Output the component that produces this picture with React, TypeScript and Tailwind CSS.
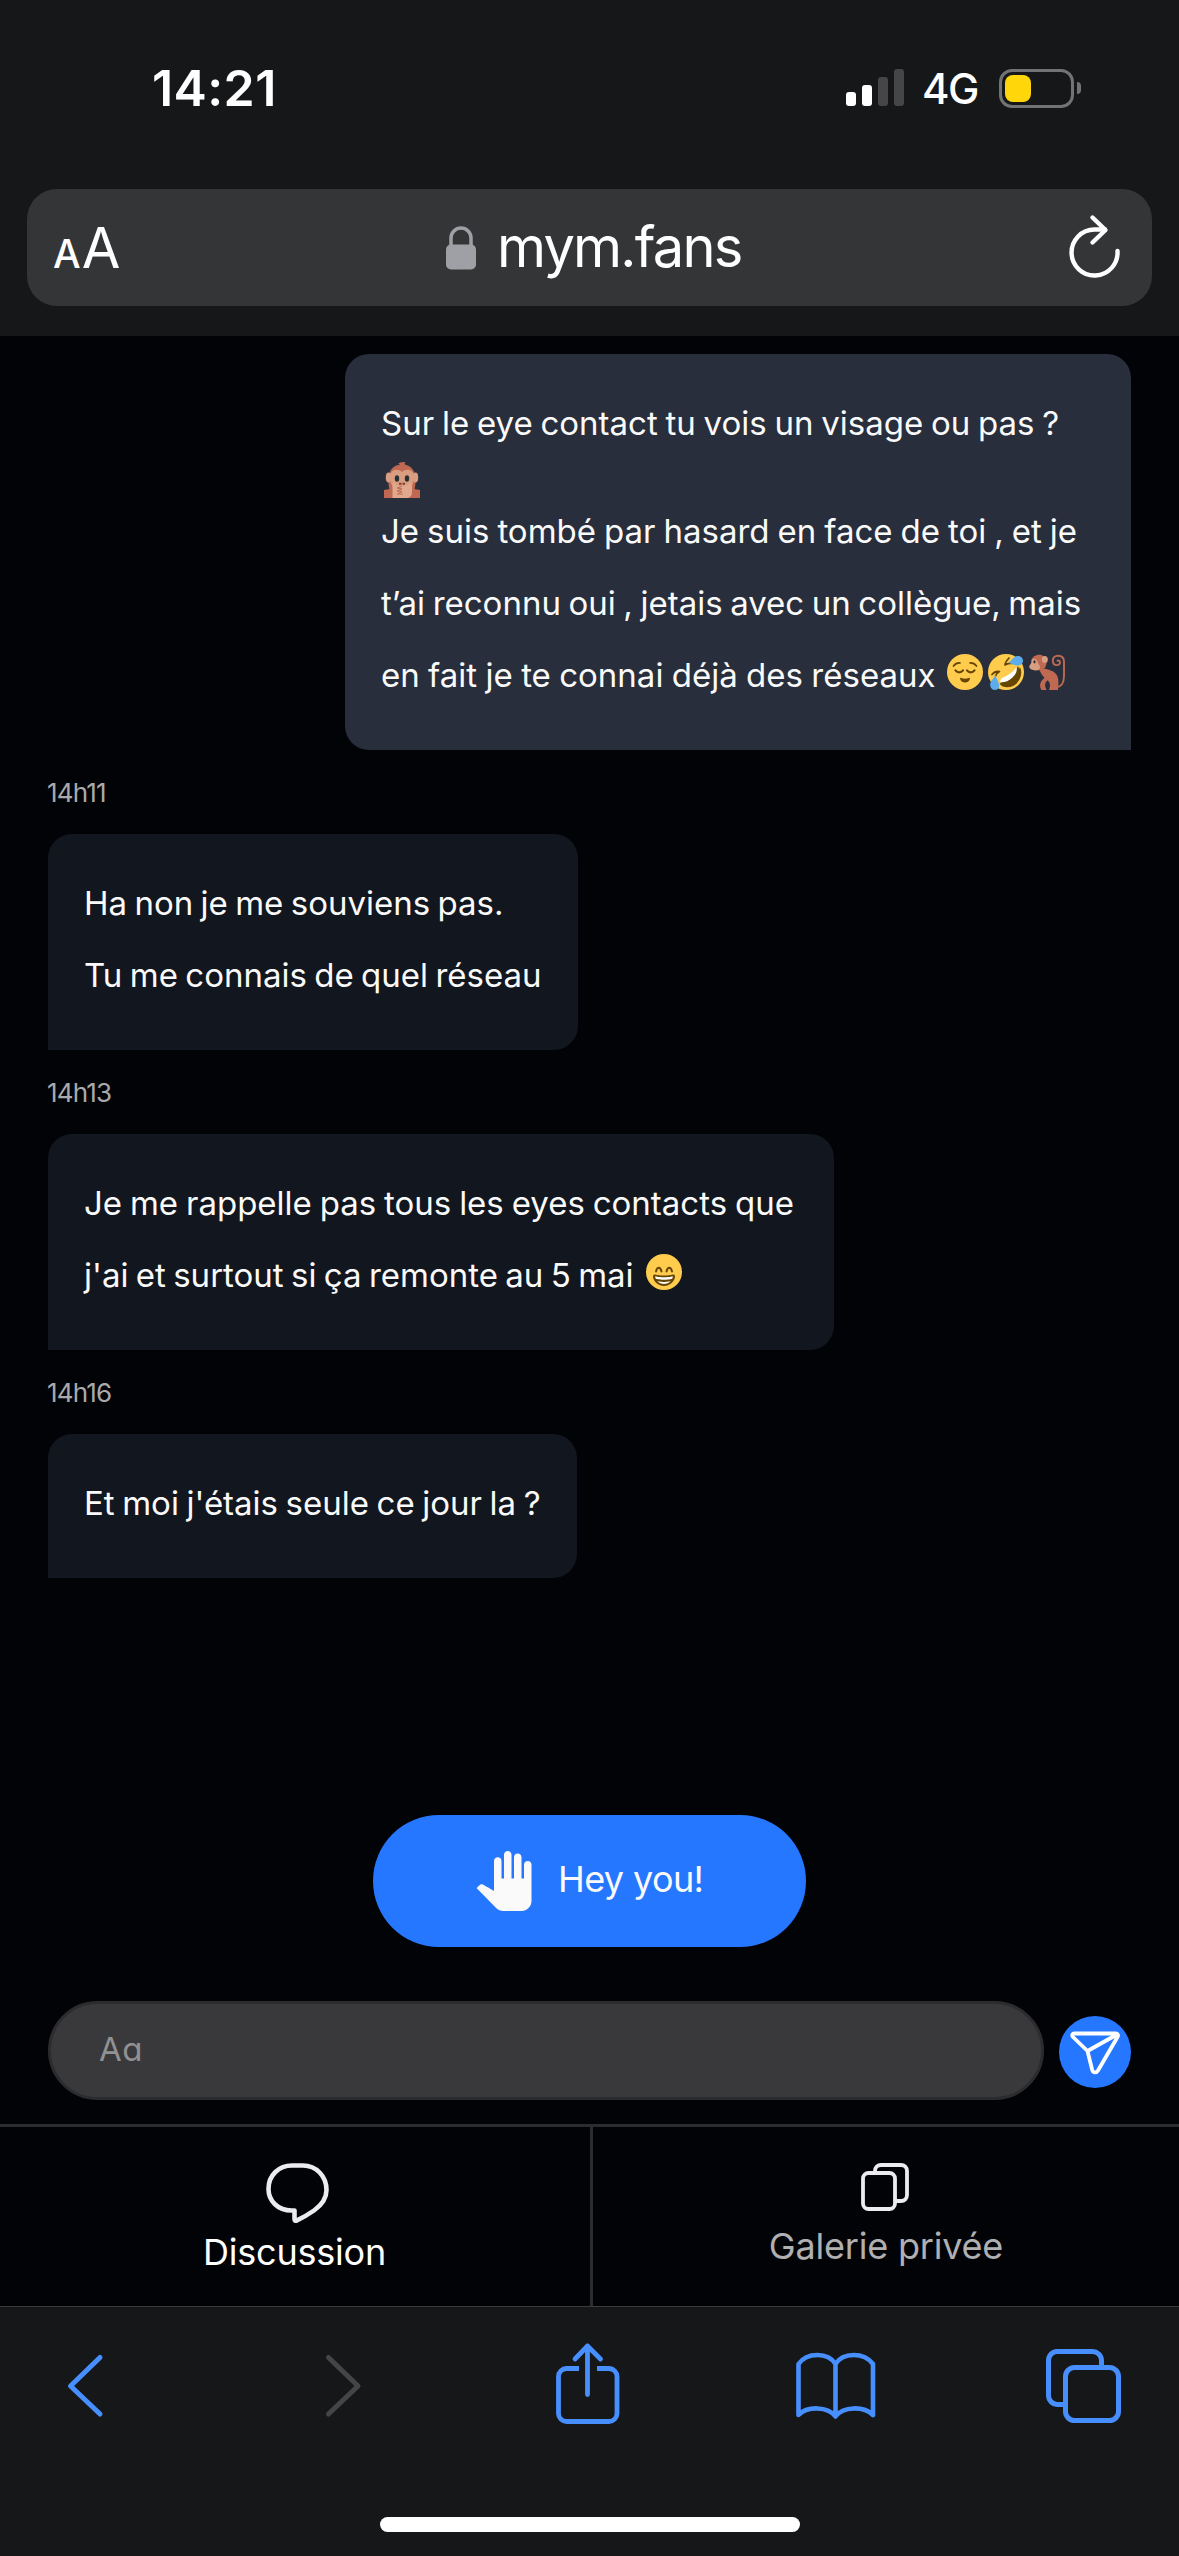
import type { ReactNode } from "react";

/* Emojis */
function MonkeyMute() {
  return (
    <svg className="w-9 h-9 shrink-0" viewBox="0 0 36 36">
      <path fill="#BF6952" d="M0 28l6-1h24l6 1v8H0z" />
      <path fill="#BF6952" d="M5.500 28C2.500 14 5 4.500 16 2.500 15 1.800 14.500 1.500 14 1.500 16 .2 19 0 21.500 0c-1 .8-1 1.500-.5 2.500C31 5 33.500 14 30.500 28z" />
      <ellipse cx="4.500" cy="15.500" rx="2.700" ry="5" fill="#D99E82" />
      <ellipse cx="31.500" cy="15.500" rx="2.700" ry="5" fill="#D99E82" />
      <path fill="#D99E82" d="M6 15c0-8 8-9 12-5 4-4 12-3 12 5 0 4-1 7-3 10H9c-2-3-3-6-3-10z" />
      <ellipse cx="13" cy="16.500" rx="2.200" ry="3.300" fill="#292F33" />
      <ellipse cx="23" cy="16.500" rx="2.200" ry="3.300" fill="#292F33" />
      <path fill="#8A3F2C" d="M15 20.800h2.500v2H15zm3.500 0H21v2h-2.500z" />
      <path fill="#E0A98D" d="M8.500 36V24c0-4 3-4 3.500-1 4 1.500 8 1.500 12 0 .5-3 4-3 4 1v7c0 2-1.500 4-4 5z" />
      <path fill="none" stroke="#BF6952" strokeWidth="1" strokeLinecap="round" d="M17.500 24.500l-4.500 1.500 5 1-5 2 5 .5-4.500 2.500h5" />
    </svg>
  );
}

function Relieved() {
  return (
    <svg className="w-9 h-9 shrink-0" viewBox="0 0 36 36">
      <circle cx="18" cy="18" r="18" fill="#FFCC4D" />
      <g fill="none" stroke="#664500" strokeWidth="1.700" strokeLinecap="round">
        <path d="M6.500 12C8 9.800 10 8.800 13 8.900" />
        <path d="M29.500 12C28 9.800 26 8.800 23 8.900" />
        <path d="M8.500 16.300c2 2.700 5.500 2.700 7.500 0" strokeWidth="2.200" />
        <path d="M20 16.300c2 2.700 5.500 2.700 7.500 0" strokeWidth="2.200" />
      </g>
      <path fill="#664500" d="M13 24.500c0-.8.700-.9 1.300-.5 2.300 1 5.100 1 7.400 0 .600-.4 1.300-.3 1.300.5C22.500 27 20.500 28.500 18 28.500S13.500 27 13 24.500z" />
    </svg>
  );
}

function Rofl() {
  return (
    <svg className="w-9 h-9 shrink-0" viewBox="0 0 36 36">
      <circle cx="18" cy="18" r="18" fill="#FFCC4D" />
      <path fill="#664500" d="M32 13c3.500 7-.5 16-7 19-5 2.500-11 1.500-13.500-2.500C20 27.500 29 21 32 13z" />
      <path fill="#664500" d="M30 12c4 8 0 15-6 19-4 2.500-9 2-12-2 8-3 14-9 18-17z" />
      <path fill="#FFF" d="M28.500 13.500c1 4-1 7-4.500 10.500-3.500 3-7 4.500-11.500 4.200-.5-1.200 0-3 1.500-4.200 6-2.500 11-6 14.500-10.500z" />
      <g fill="none" stroke="#664500" strokeWidth="1.700" strokeLinecap="round" strokeLinejoin="round">
        <path d="M4 20.500c2-2.500 4.500-3.500 7.500-3-2 1-3.500 2.500-4 4.500" />
        <path d="M21 4c-2 2-3.800 4-4 7 2-1.500 4-2 6.500-1.500" />
      </g>
      <path fill="#5DADEC" d="M20.500 9c3-3 5.500-7 9-7 3.500 0 6 2.500 5.500 5.500-.5 3-3.500 4.500-6.500 4-3-.7-5-2-8-2.500z" />
      <path fill="#5DADEC" d="M7.500 20.500c-1.500 4-5 6-5.300 9.500-.2 3.500 1.800 5.800 4.600 5.900 3 .1 4.700-2 4.300-5.200-.4-3.200-3-6-3.600-10.200z" />
    </svg>
  );
}

function Monkey() {
  return (
    <svg className="w-9 h-9 shrink-0" viewBox="0 0 36 36">
      <path fill="none" stroke="#BF6952" strokeWidth="1.900" strokeLinecap="round" d="M27 33.500c6-1 8-4.500 8-11.500V8c0-4-2.500-6.300-6-6.300-3 0-5.200 2-5.200 4.800s1.800 4.600 4.200 4.600c2 0 3.300-1.500 3-3.200-.3-1.300-1.600-1.700-2.500-1.200" />
      <path fill="#BF6952" d="M10 14c8 1 17 2 19 10 1 4 0 8 0 12h-9c2-5 1-8-2-10-4-3-7-7-8-12z" />
      <path fill="#BF6952" d="M12.500 36c-3-4.500-1-10.500 5-13l2 2.500c-3.500 2.500-4.500 5-2 10.500z" />
      <path fill="#BF6952" d="M2 7C3.500 2 8-.2 12.500 1 17 2.500 18.500 7 17 11.500c-1 3.500-4 5-7 5z" />
      <ellipse cx="15.800" cy="5.500" rx="3" ry="3.500" fill="#D99E82" />
      <path fill="#D99E82" d="M3 5.500C5 4 8 5 8.500 8c.3 2 2.500 3 2.500 5 0 2.500-2 3.700-4.500 3.500-3-.3-6-1.500-6.300-3.500C0 11.500 1.500 10.500 2.200 9z" />
      <ellipse cx="5.500" cy="7.800" rx="1.100" ry="1.600" fill="#292F33" />
    </svg>
  );
}

function Beaming() {
  return (
    <svg className="w-9 h-9 shrink-0" viewBox="0 0 36 36">
      <circle cx="18" cy="18" r="18" fill="#FFCC4D" />
      <g fill="none" stroke="#664500" strokeWidth="1.900" strokeLinecap="round">
        <path d="M10 17.500c1-5 4.500-5 5.500 0" />
        <path d="M20.500 17.500c1-5 4.500-5 5.500 0" />
      </g>
      <path fill="#664500" d="M18 21.500c-3.600 0-6-.4-9-1-.700-.1-2 0-2 2 0 4 4.600 9.500 11 9.500s11-5.500 11-9.500c0-2-1.300-2.100-2-2-3 .6-5.400 1-9 1z" />
      <path fill="#FFF" d="M9 22.300s3 1 9 1 9-1 9-1-.2 1.300-.8 2.500c0 0-2.700 1-8.200 1s-8.200-1-8.200-1c-.6-1.200-.8-2.500-.8-2.500zM11.300 27.100s2.500.9 6.700.9 6.700-.9 6.700-.9S22.500 30 18 30s-6.700-2.900-6.700-2.900z" />
    </svg>
  );
}

function Time({ children }: { children: ReactNode }) {
  return <div className="h-[84px] pl-[47px] pt-px text-[26px] leading-[84px] tracking-[-0.8px] text-[#a9a9ab]">{children}</div>;
}

function Received({ children, width }: { children: ReactNode; width: string }) {
  return (
    <div className={`${width} ml-12 rounded-3xl rounded-bl-none bg-[#12161e] px-9 pt-[33px] pb-[39px] text-[33px] leading-[72px] whitespace-nowrap`}>
      {children}
    </div>
  );
}

export default function App() {
  return (
    <div className="w-[1179px] h-[2556px] flex flex-col overflow-hidden bg-[#020307] text-[#fafafa] font-['Inter','Liberation_Sans',sans-serif]">
      <header className="h-[336px] bg-[#161719] text-white">
        {/* Status bar */}
        <div className="h-[176px] flex items-center pl-[152px]">
          <span className="w-[124px] text-[50px] font-semibold leading-none tracking-[0.4px] whitespace-nowrap">14:21</span>
          <div className="ml-[570px] mb-px flex items-end gap-1.5">
            <div className="w-2.5 h-3.5 rounded-[3px] bg-white"></div>
            <div className="w-2.5 h-[21px] rounded-[3px] bg-white"></div>
            <div className="w-2.5 h-[29px] rounded-[3px] bg-[#464648]"></div>
            <div className="w-2.5 h-[37px] rounded-[3px] bg-[#464648]"></div>
          </div>
          <span className="w-[77px] ml-[18px] pt-[2px] text-[42px] font-medium leading-none tracking-[-1.5px]">4G</span>
          <div className="w-[75px] h-[39px] rounded-[13px] border-[3px] border-[#727375] p-[3px]">
            <div className="w-[26px] h-[27px] rounded-[8px] bg-[#ffd60a]"></div>
          </div>
          <div className="ml-[3px] w-1 h-3 rounded-r-full bg-[#727375]"></div>
        </div>

        {/* Address bar */}
        <div className="mt-[13px] mx-[27px] h-[117px] rounded-[30px] bg-[#343537] flex items-center">
          <div className="w-[418px] pl-[26px] pt-px flex items-baseline leading-none">
            <span className="text-[39px] font-medium">A</span>
            <span className="ml-px text-[56px] tracking-[-1px]">A</span>
          </div>
          <svg className="w-8 h-11 shrink-0" viewBox="0 0 32 44" fill="none">
            <path d="M6 22V12a10 10 0 0 1 20 0v10" stroke="#9f9fa6" strokeWidth="3.500" />
            <rect x="1" y="18.500" width="30" height="25" rx="5" fill="#9f9fa6" />
          </svg>
          <span className="ml-5 pb-px text-[56px] leading-none tracking-[-1.8px]">mym.fans</span>
          <svg className="ml-auto mr-[28px] w-[60px] h-[72px]" viewBox="0 0 60 72" fill="none" stroke="#fff" strokeWidth="4.400" strokeLinecap="round" strokeLinejoin="round">
            <path d="M53.500 39A23 23 0 1 1 30.500 17.500H41" />
            <path d="M28.500 5.500L41.500 18 28.500 30.500" />
          </svg>
        </div>
      </header>

      {/* Messages */}
      <main>
        <div className="mt-[18px] ml-[345px] w-[786px] h-[396px] rounded-3xl rounded-br-none bg-[#282e3c] pl-9 pt-[33px] text-[33px] leading-[72px] whitespace-nowrap">
          <p className="[word-spacing:-1.5px]">Sur le eye contact tu vois un visage ou pas ?</p>
          <div className="h-9 pt-[3px] pl-[3px]"><MonkeyMute /></div>
          <p className="[word-spacing:-1.300px]">Je suis tombé par hasard en face de toi , et je</p>
          <p className="[word-spacing:-1.700px]">t’ai reconnu oui , jetais avec un collègue, mais</p>
          <div className="flex items-center">
            <p className="w-[566px] [word-spacing:-0.900px]">en fait je te connai déjà des réseaux</p>
            <div className="flex gap-[5px] mb-1.5">
              <Relieved />
              <Rofl />
              <Monkey />
            </div>
          </div>
        </div>

        <Time>14h11</Time>
        <Received width="w-[530px]">
          <p className="[word-spacing:-1.900px]">Ha non je me souviens pas.</p>
          <p className="[word-spacing:-1.900px]">Tu me connais de quel réseau</p>
        </Received>

        <Time>14h13</Time>
        <Received width="w-[786px]">
          <p className="[word-spacing:-1.400px]">Je me rappelle pas tous les eyes contacts que</p>
          <div className="flex items-center">
            <p className="w-[562px] [word-spacing:-1.900px]">j'ai et surtout si ça remonte au 5 mai</p>
            <div className="mb-1.5"><Beaming /></div>
          </div>
        </Received>

        <Time>14h16</Time>
        <Received width="w-[529px]">
          <p className="[word-spacing:-1.700px]">Et moi j'étais seule ce jour la ?</p>
        </Received>
      </main>

      <button className="mt-[237px] mx-auto w-[433px] h-[132px] rounded-full bg-[#2677ff] flex items-center pl-[101px]">
        <svg className="w-[60px] h-[60px]" viewBox="0 0 24 24" fill="#fafafa">
          <path d="M23 5.500V20c0 2.200-1.800 4-4 4h-7.300c-1.080 0-2.100-.43-2.850-1.190L1 14.830s1.260-1.230 1.300-1.250c.22-.19.49-.29.79-.29.22 0 .42.060.6.160.040.010 4.310 2.460 4.310 2.460V4c0-.83.67-1.500 1.500-1.500S11 3.170 11 4v7h1V1.500c0-.83.67-1.500 1.500-1.500S15 .67 15 1.500V11h1V2.500c0-.83.67-1.500 1.500-1.500s1.500.67 1.500 1.500V11h1V5.500c0-.83.67-1.500 1.500-1.500s1.500.67 1.500 1.500z" />
        </svg>
        <span className="ml-6 pb-1 text-[36px] leading-none tracking-[-0.600px]">Hey you!</span>
      </button>

      {/* Message input */}
      <div className="mt-[54px] pl-12 h-[99px] flex items-center">
        <div className="w-[996px] h-[99px] rounded-[50px] border-[3px] border-[#2c2c2e] bg-[#39393b] pl-[48px] text-[33px] leading-[91px] tracking-[0.500px] text-[#919193] [font-feature-settings:'cv11']">
          Aa
        </div>
        <svg className="ml-[15px] mt-[3px] w-[72px] h-[72px]" viewBox="0 0 72 72" fill="none">
          <circle cx="36" cy="36" r="36" fill="#2677ff" />
          <path
            d="M15.500 17.500H56.500C59 17.500 59.500 19.200 58.500 21L39 54.500C37.300 57.300 33.800 57 33.200 54L28.500 35 14 21C12.500 19.300 13.200 17.500 15.500 17.500ZM28.500 35L58 18.500"
            stroke="#fff"
            strokeWidth="3.800"
            strokeLinejoin="round"
          />
        </svg>
      </div>

      {/* Tabs */}
      <nav className="mt-6 h-[183px] border-t-[3px] border-[#2b2c2e] border-b border-b-[#3a3b3d] flex text-[36px] leading-none">
        <div className="w-[593px] border-r-[3px] border-[#2b2c2e] flex flex-col items-center pt-9 text-white">
          <svg className="ml-[5px] w-[63px] h-[60px]" viewBox="0 0 63 60" fill="none" stroke="#ececee" strokeWidth="4.600" strokeLinejoin="round">
            <path d="M28.500 47.500H25.500C12 47.500 2.500 38 2.500 26 2.500 12 13 2.500 26 2.500h11C50 2.500 60.500 13 60.500 27 60.500 36 55 42.500 48 47.500 43 51 37 54.500 31 57.300 29 58.200 28.500 57.500 28.500 56Z" />
          </svg>
          <span className="mt-[11px] mr-px tracking-[-0.200px]">Discussion</span>
        </div>
        <div className="flex-1 flex flex-col items-center pt-9 pr-[2px] text-[#b0b0b2]">
          <svg className="w-12 h-12" viewBox="0 0 48 48" fill="none" stroke="#ececee" strokeWidth="3.800" strokeLinejoin="round">
            <rect x="2" y="10" width="32" height="36" rx="5.500" />
            <path d="M14 9V8c0-3.500 2.500-6 6-6h20c3.500 0 6 2.500 6 6v24c0 3.500-2.500 6-6 6h-5" />
          </svg>
          <span className="mt-[17px] ml-[2px] tracking-[-0.200px]">Galerie privée</span>
        </div>
      </nav>

      {/* Safari toolbar */}
      <footer className="flex-1 bg-[#161719]">
        <div className="h-[209px] pt-[33px] pl-[60px] flex">
          <svg className="w-[50px] h-[90px]" viewBox="60 2340 50 90" fill="none" stroke="#478fff" strokeWidth="5" strokeLinecap="round" strokeLinejoin="round">
            <path d="M100 2357.500L70.500 2386 100 2414" />
          </svg>
          <svg className="ml-[210px] w-[50px] h-[90px]" viewBox="320 2340 50 90" fill="none" stroke="#454547" strokeWidth="5" strokeLinecap="round" strokeLinejoin="round">
            <path d="M328.500 2357.500L358 2386 328.500 2414" />
          </svg>
          <svg className="ml-[180px] w-[75px] h-[90px]" viewBox="550 2340 75 90" fill="none" stroke="#478fff" strokeWidth="4.800" strokeLinecap="round" strokeLinejoin="round">
            <path d="M579 2368.500H566.500A8 8 0 0 0 558.500 2376.500V2413.500A8 8 0 0 0 566.500 2421.500H609A8 8 0 0 0 617 2413.500V2376.500A8 8 0 0 0 609 2368.500H597" strokeLinecap="butt" />
            <path d="M587.500 2346V2394.500M575 2359L587.500 2346 600.500 2359" />
          </svg>
          <svg className="ml-[165px] w-[90px] h-[90px]" viewBox="790 2340 90 90" fill="none" stroke="#478fff" strokeWidth="4.600" strokeLinecap="round" strokeLinejoin="round">
            <path d="M835.500 2364C828 2352 807 2352 798.500 2364V2415C807 2406 828 2406 835.500 2416.500 843 2406 864 2406 873 2415V2364C864 2352 843 2352 835.500 2364ZM835.500 2364V2416" />
          </svg>
          <svg className="ml-[160px] w-[90px] h-[90px]" viewBox="1040 2340 90 90" fill="none" stroke="#478fff" strokeWidth="5" strokeLinejoin="round">
            <path d="M1063 2404.500H1057A9 9 0 0 1 1048.500 2396V2360.500A9 9 0 0 1 1057 2351.500H1092A9 9 0 0 1 1101.500 2360.500V2366" />
            <rect x="1065.500" y="2367.500" width="53" height="53" rx="9" />
          </svg>
        </div>
        <div className="mt-px mx-auto w-[420px] h-[15px] rounded-full bg-white"></div>
      </footer>
    </div>
  );
}
